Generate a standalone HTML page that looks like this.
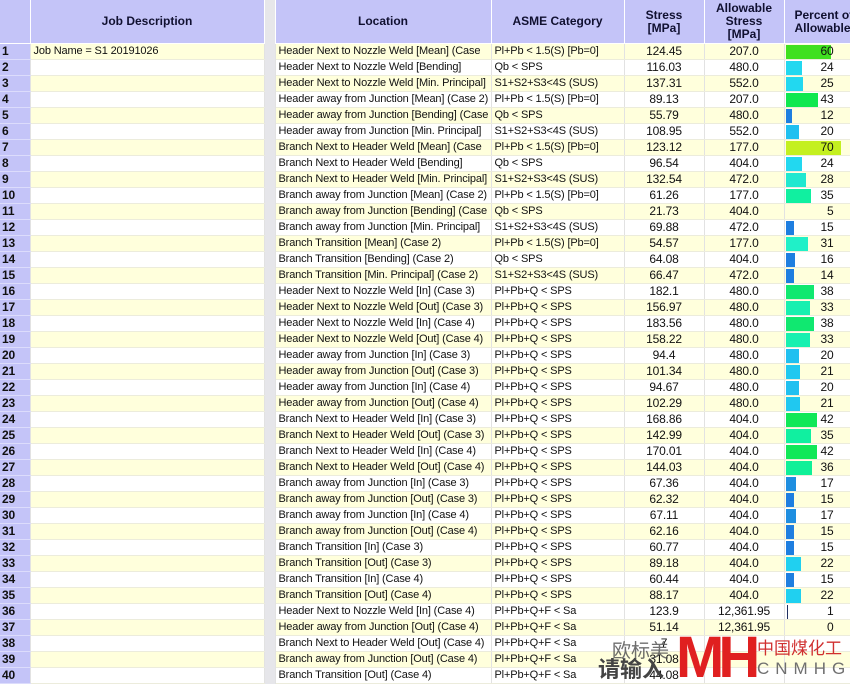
<!DOCTYPE html>
<html><head><meta charset="utf-8"><style>
body{margin:0;width:850px;height:687px;overflow:hidden;background:#fff;font-family:"Liberation Sans",Arial,sans-serif;position:relative}
table{border-collapse:collapse;table-layout:fixed;position:absolute;left:0;top:0;width:850px}
td,th{padding:0;font-size:11px;letter-spacing:-0.15px;white-space:nowrap;overflow:hidden;border-right:1px solid #e2e2e2;border-bottom:1px solid #ececdc}
th{background:#c4c4f8;height:43px;font-size:12px;letter-spacing:0;font-weight:bold;color:#101030;line-height:13px;border-right:1px solid #fff;border-bottom:1px solid #fff}
tr.d td{height:15px;line-height:15px;color:#111}
tr.d:nth-child(even) td{background:#ffffdc}
td.n{background:#c4c4f8!important;font-weight:bold;font-size:12px;padding-left:2px;color:#101040;border-bottom:1px solid #dcdcfc}
td.g,th.g{background:#e6e6ea!important;border-bottom:none}
td.t{padding-left:3px}
td.c{text-align:center;font-size:12px}
td.p{position:relative;text-align:right;padding-right:16px;font-size:12px}
td.p i{position:absolute;left:1px;top:1px;height:14px}
.wm{position:absolute;font-family:"Noto Sans CJK SC",sans-serif;white-space:nowrap}
</style></head><body>
<table>
<colgroup><col style="width:30px"><col style="width:234px"><col style="width:11px"><col style="width:216px"><col style="width:133px"><col style="width:80px"><col style="width:80px"><col style="width:66px"></colgroup>
<tr><th></th><th>Job Description</th><th class="g"></th><th>Location</th><th>ASME Category</th><th>Stress<br>[MPa]</th><th>Allowable<br>Stress<br>[MPa]</th><th style="text-align:left;padding-left:10px">Percent of<br>Allowable</th></tr>
<tr class="d"><td class="n">1</td><td class="t">Job Name = S1 20191026</td><td class="g"></td><td class="t">Header Next to Nozzle Weld [Mean] (Case</td><td class="t">Pl+Pb &lt; 1.5(S) [Pb=0]</td><td class="c">124.45</td><td class="c">207.0</td><td class="p"><i style="width:45px;background:#40e020"></i><span style="position:relative">60</span></td></tr>
<tr class="d"><td class="n">2</td><td></td><td class="g"></td><td class="t">Header Next to Nozzle Weld [Bending]</td><td class="t">Qb &lt; SPS</td><td class="c">116.03</td><td class="c">480.0</td><td class="p"><i style="width:16px;background:#22d8f0"></i>24</td></tr>
<tr class="d"><td class="n">3</td><td></td><td class="g"></td><td class="t">Header Next to Nozzle Weld [Min. Principal]</td><td class="t">S1+S2+S3&lt;4S (SUS)</td><td class="c">137.31</td><td class="c">552.0</td><td class="p"><i style="width:17px;background:#22d8f0"></i>25</td></tr>
<tr class="d"><td class="n">4</td><td></td><td class="g"></td><td class="t">Header away from Junction [Mean] (Case 2)</td><td class="t">Pl+Pb &lt; 1.5(S) [Pb=0]</td><td class="c">89.13</td><td class="c">207.0</td><td class="p"><i style="width:32px;background:#10e850"></i>43</td></tr>
<tr class="d"><td class="n">5</td><td></td><td class="g"></td><td class="t">Header away from Junction [Bending] (Case</td><td class="t">Qb &lt; SPS</td><td class="c">55.79</td><td class="c">480.0</td><td class="p"><i style="width:6px;background:#1e7ee0"></i>12</td></tr>
<tr class="d"><td class="n">6</td><td></td><td class="g"></td><td class="t">Header away from Junction [Min. Principal]</td><td class="t">S1+S2+S3&lt;4S (SUS)</td><td class="c">108.95</td><td class="c">552.0</td><td class="p"><i style="width:13px;background:#20c0f0"></i>20</td></tr>
<tr class="d"><td class="n">7</td><td></td><td class="g"></td><td class="t">Branch Next to Header Weld [Mean] (Case</td><td class="t">Pl+Pb &lt; 1.5(S) [Pb=0]</td><td class="c">123.12</td><td class="c">177.0</td><td class="p"><i style="width:55px;background:#c4f020"></i><span style="position:relative">70</span></td></tr>
<tr class="d"><td class="n">8</td><td></td><td class="g"></td><td class="t">Branch Next to Header Weld [Bending]</td><td class="t">Qb &lt; SPS</td><td class="c">96.54</td><td class="c">404.0</td><td class="p"><i style="width:16px;background:#22d8f0"></i>24</td></tr>
<tr class="d"><td class="n">9</td><td></td><td class="g"></td><td class="t">Branch Next to Header Weld [Min. Principal]</td><td class="t">S1+S2+S3&lt;4S (SUS)</td><td class="c">132.54</td><td class="c">472.0</td><td class="p"><i style="width:20px;background:#20e8d0"></i>28</td></tr>
<tr class="d"><td class="n">10</td><td></td><td class="g"></td><td class="t">Branch away from Junction [Mean] (Case 2)</td><td class="t">Pl+Pb &lt; 1.5(S) [Pb=0]</td><td class="c">61.26</td><td class="c">177.0</td><td class="p"><i style="width:25px;background:#10f0a0"></i>35</td></tr>
<tr class="d"><td class="n">11</td><td></td><td class="g"></td><td class="t">Branch away from Junction [Bending] (Case</td><td class="t">Qb &lt; SPS</td><td class="c">21.73</td><td class="c">404.0</td><td class="p">5</td></tr>
<tr class="d"><td class="n">12</td><td></td><td class="g"></td><td class="t">Branch away from Junction [Min. Principal]</td><td class="t">S1+S2+S3&lt;4S (SUS)</td><td class="c">69.88</td><td class="c">472.0</td><td class="p"><i style="width:8px;background:#1e7ee0"></i>15</td></tr>
<tr class="d"><td class="n">13</td><td></td><td class="g"></td><td class="t">Branch Transition [Mean] (Case 2)</td><td class="t">Pl+Pb &lt; 1.5(S) [Pb=0]</td><td class="c">54.57</td><td class="c">177.0</td><td class="p"><i style="width:22px;background:#20f0c8"></i>31</td></tr>
<tr class="d"><td class="n">14</td><td></td><td class="g"></td><td class="t">Branch Transition [Bending] (Case 2)</td><td class="t">Qb &lt; SPS</td><td class="c">64.08</td><td class="c">404.0</td><td class="p"><i style="width:9px;background:#1e7ee0"></i>16</td></tr>
<tr class="d"><td class="n">15</td><td></td><td class="g"></td><td class="t">Branch Transition [Min. Principal] (Case 2)</td><td class="t">S1+S2+S3&lt;4S (SUS)</td><td class="c">66.47</td><td class="c">472.0</td><td class="p"><i style="width:8px;background:#1e7ee0"></i>14</td></tr>
<tr class="d"><td class="n">16</td><td></td><td class="g"></td><td class="t">Header Next to Nozzle Weld [In] (Case 3)</td><td class="t">Pl+Pb+Q &lt; SPS</td><td class="c">182.1</td><td class="c">480.0</td><td class="p"><i style="width:28px;background:#10e870"></i>38</td></tr>
<tr class="d"><td class="n">17</td><td></td><td class="g"></td><td class="t">Header Next to Nozzle Weld [Out] (Case 3)</td><td class="t">Pl+Pb+Q &lt; SPS</td><td class="c">156.97</td><td class="c">480.0</td><td class="p"><i style="width:24px;background:#18f0b0"></i>33</td></tr>
<tr class="d"><td class="n">18</td><td></td><td class="g"></td><td class="t">Header Next to Nozzle Weld [In] (Case 4)</td><td class="t">Pl+Pb+Q &lt; SPS</td><td class="c">183.56</td><td class="c">480.0</td><td class="p"><i style="width:28px;background:#10e870"></i>38</td></tr>
<tr class="d"><td class="n">19</td><td></td><td class="g"></td><td class="t">Header Next to Nozzle Weld [Out] (Case 4)</td><td class="t">Pl+Pb+Q &lt; SPS</td><td class="c">158.22</td><td class="c">480.0</td><td class="p"><i style="width:24px;background:#18f0b0"></i>33</td></tr>
<tr class="d"><td class="n">20</td><td></td><td class="g"></td><td class="t">Header away from Junction [In] (Case 3)</td><td class="t">Pl+Pb+Q &lt; SPS</td><td class="c">94.4</td><td class="c">480.0</td><td class="p"><i style="width:13px;background:#20c0f0"></i>20</td></tr>
<tr class="d"><td class="n">21</td><td></td><td class="g"></td><td class="t">Header away from Junction [Out] (Case 3)</td><td class="t">Pl+Pb+Q &lt; SPS</td><td class="c">101.34</td><td class="c">480.0</td><td class="p"><i style="width:14px;background:#20c8f0"></i>21</td></tr>
<tr class="d"><td class="n">22</td><td></td><td class="g"></td><td class="t">Header away from Junction [In] (Case 4)</td><td class="t">Pl+Pb+Q &lt; SPS</td><td class="c">94.67</td><td class="c">480.0</td><td class="p"><i style="width:13px;background:#20c0f0"></i>20</td></tr>
<tr class="d"><td class="n">23</td><td></td><td class="g"></td><td class="t">Header away from Junction [Out] (Case 4)</td><td class="t">Pl+Pb+Q &lt; SPS</td><td class="c">102.29</td><td class="c">480.0</td><td class="p"><i style="width:14px;background:#20c8f0"></i>21</td></tr>
<tr class="d"><td class="n">24</td><td></td><td class="g"></td><td class="t">Branch Next to Header Weld [In] (Case 3)</td><td class="t">Pl+Pb+Q &lt; SPS</td><td class="c">168.86</td><td class="c">404.0</td><td class="p"><i style="width:31px;background:#10e858"></i>42</td></tr>
<tr class="d"><td class="n">25</td><td></td><td class="g"></td><td class="t">Branch Next to Header Weld [Out] (Case 3)</td><td class="t">Pl+Pb+Q &lt; SPS</td><td class="c">142.99</td><td class="c">404.0</td><td class="p"><i style="width:25px;background:#10f0a0"></i>35</td></tr>
<tr class="d"><td class="n">26</td><td></td><td class="g"></td><td class="t">Branch Next to Header Weld [In] (Case 4)</td><td class="t">Pl+Pb+Q &lt; SPS</td><td class="c">170.01</td><td class="c">404.0</td><td class="p"><i style="width:31px;background:#10e858"></i>42</td></tr>
<tr class="d"><td class="n">27</td><td></td><td class="g"></td><td class="t">Branch Next to Header Weld [Out] (Case 4)</td><td class="t">Pl+Pb+Q &lt; SPS</td><td class="c">144.03</td><td class="c">404.0</td><td class="p"><i style="width:26px;background:#10f098"></i>36</td></tr>
<tr class="d"><td class="n">28</td><td></td><td class="g"></td><td class="t">Branch away from Junction [In] (Case 3)</td><td class="t">Pl+Pb+Q &lt; SPS</td><td class="c">67.36</td><td class="c">404.0</td><td class="p"><i style="width:10px;background:#1e8ee0"></i>17</td></tr>
<tr class="d"><td class="n">29</td><td></td><td class="g"></td><td class="t">Branch away from Junction [Out] (Case 3)</td><td class="t">Pl+Pb+Q &lt; SPS</td><td class="c">62.32</td><td class="c">404.0</td><td class="p"><i style="width:8px;background:#1e7ee0"></i>15</td></tr>
<tr class="d"><td class="n">30</td><td></td><td class="g"></td><td class="t">Branch away from Junction [In] (Case 4)</td><td class="t">Pl+Pb+Q &lt; SPS</td><td class="c">67.11</td><td class="c">404.0</td><td class="p"><i style="width:10px;background:#1e8ee0"></i>17</td></tr>
<tr class="d"><td class="n">31</td><td></td><td class="g"></td><td class="t">Branch away from Junction [Out] (Case 4)</td><td class="t">Pl+Pb+Q &lt; SPS</td><td class="c">62.16</td><td class="c">404.0</td><td class="p"><i style="width:8px;background:#1e7ee0"></i>15</td></tr>
<tr class="d"><td class="n">32</td><td></td><td class="g"></td><td class="t">Branch Transition [In] (Case 3)</td><td class="t">Pl+Pb+Q &lt; SPS</td><td class="c">60.77</td><td class="c">404.0</td><td class="p"><i style="width:8px;background:#1e7ee0"></i>15</td></tr>
<tr class="d"><td class="n">33</td><td></td><td class="g"></td><td class="t">Branch Transition [Out] (Case 3)</td><td class="t">Pl+Pb+Q &lt; SPS</td><td class="c">89.18</td><td class="c">404.0</td><td class="p"><i style="width:15px;background:#20d0f0"></i>22</td></tr>
<tr class="d"><td class="n">34</td><td></td><td class="g"></td><td class="t">Branch Transition [In] (Case 4)</td><td class="t">Pl+Pb+Q &lt; SPS</td><td class="c">60.44</td><td class="c">404.0</td><td class="p"><i style="width:8px;background:#1e7ee0"></i>15</td></tr>
<tr class="d"><td class="n">35</td><td></td><td class="g"></td><td class="t">Branch Transition [Out] (Case 4)</td><td class="t">Pl+Pb+Q &lt; SPS</td><td class="c">88.17</td><td class="c">404.0</td><td class="p"><i style="width:15px;background:#20d0f0"></i>22</td></tr>
<tr class="d"><td class="n">36</td><td></td><td class="g"></td><td class="t">Header Next to Nozzle Weld [In] (Case 4)</td><td class="t">Pl+Pb+Q+F &lt; Sa</td><td class="c">123.9</td><td class="c">12,361.95</td><td class="p"><i style="width:1px;background:#203060;left:2px"></i>1</td></tr>
<tr class="d"><td class="n">37</td><td></td><td class="g"></td><td class="t">Header away from Junction [Out] (Case 4)</td><td class="t">Pl+Pb+Q+F &lt; Sa</td><td class="c">51.14</td><td class="c">12,361.95</td><td class="p">0</td></tr>
<tr class="d"><td class="n">38</td><td></td><td class="g"></td><td class="t">Branch Next to Header Weld [Out] (Case 4)</td><td class="t">Pl+Pb+Q+F &lt; Sa</td><td class="c">7</td><td class="c"></td><td class="p"></td></tr>
<tr class="d"><td class="n">39</td><td></td><td class="g"></td><td class="t">Branch away from Junction [Out] (Case 4)</td><td class="t">Pl+Pb+Q+F &lt; Sa</td><td class="c">31.08</td><td class="c"></td><td class="p"></td></tr>
<tr class="d"><td class="n">40</td><td></td><td class="g"></td><td class="t">Branch Transition [Out] (Case 4)</td><td class="t">Pl+Pb+Q+F &lt; Sa</td><td class="c">44.08</td><td class="c"></td><td class="p"></td></tr>
</table>
<div class="wm" style="left:612px;top:636px;font-size:19px;color:#555;opacity:.85">欧标美</div>
<div class="wm" style="left:598px;top:652px;font-size:22px;font-weight:bold;color:#444">请输入</div>
<div class="wm" style="left:676px;top:630px;font-family:'Liberation Sans',sans-serif;font-size:58px;font-weight:bold;color:#e02020;letter-spacing:-6px;line-height:56px">MH</div>
<div class="wm" style="left:757px;top:634px;font-size:17px;color:#d03030;letter-spacing:0">中国煤化工</div>
<div class="wm" style="left:757px;top:659px;font-family:'Liberation Sans',sans-serif;font-size:17px;color:#707070;letter-spacing:6px">CNMHG</div>
</body></html>
